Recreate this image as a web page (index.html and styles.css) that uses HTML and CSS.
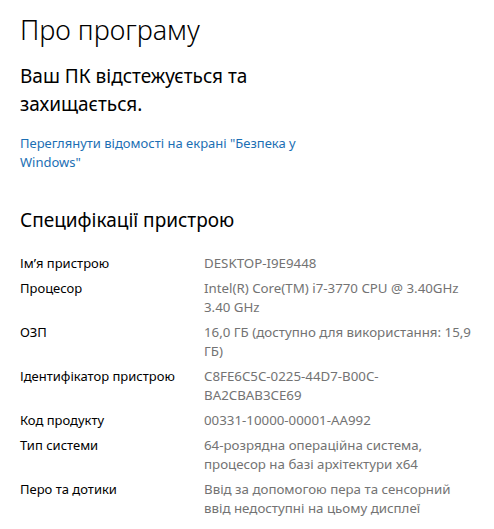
FILE: index.html
```html
<!DOCTYPE html>
<html lang="uk">
<head>
<meta charset="utf-8">
<link rel="stylesheet" href="styles.css">
</head>
<body>
<main class="page">
  <h1 class="title">Про програму</h1>
  <p class="status">Ваш ПК відстежується та<br>захищається.</p>
  <a class="link" href="#">Переглянути відомості на екрані "Безпека у<br>Windows"</a>
  <h2 class="section">Специфікації пристрою</h2>
  <dl class="specs">
    <div class="row"><dt>Ім’я пристрою</dt><dd>DESKTOP-I9E9448</dd></div>
    <div class="row"><dt>Процесор</dt><dd>Intel(R) Core(TM) i7-3770 CPU @ 3.40GHz<br>3.40 GHz</dd></div>
    <div class="row"><dt>ОЗП</dt><dd>16,0 ГБ (доступно для використання: 15,9<br>ГБ)</dd></div>
    <div class="row"><dt>Ідентифікатор пристрою</dt><dd>C8FE6C5C-0225-44D7-B00C-<br>BA2CBAB3CE69</dd></div>
    <div class="row"><dt>Код продукту</dt><dd>00331-10000-00001-AA992</dd></div>
    <div class="row"><dt>Тип системи</dt><dd>64-розрядна операційна система,<br>процесор на базі архітектури x64</dd></div>
    <div class="row"><dt>Перо та дотики</dt><dd>Ввід за допомогою пера та сенсорний<br>ввід недоступні на цьому дисплеї</dd></div>
  </dl>
</main>
</body>
</html>
```
FILE: styles.css
```css
html, body {
  margin: 0;
  padding: 0;
  background: #ffffff;
}
body {
  font-family: "Noto Sans", "Open Sans", sans-serif;
  color: #000000;
}
.page {
  padding: 12px 20px 0 20px;
}
.title {
  margin: 0;
  font-size: 27px;
  font-weight: 300;
  line-height: 36px;
}
.status {
  margin: 14px 0 0 0;
  font-size: 19px;
  font-weight: 400;
  line-height: 28px;
}
.link {
  display: block;
  margin-top: 16px;
  font-size: 13px;
  line-height: 19px;
  color: #1c6fb4;
  text-decoration: none;
}
.section {
  margin: 34px 0 0 0;
  font-size: 19px;
  font-weight: 400;
  line-height: 28px;
}
.specs {
  margin: 20px 0 0 0;
  display: flex;
  flex-direction: column;
  gap: 6px;
}
.row {
  display: grid;
  grid-template-columns: 184px 1fr;
  font-size: 13px;
  line-height: 19px;
}
.row dt {
  margin: 0;
  color: #000000;
}
.row dd {
  margin: 0;
  font-size: 13.3px;
  color: #737373;
}
```
